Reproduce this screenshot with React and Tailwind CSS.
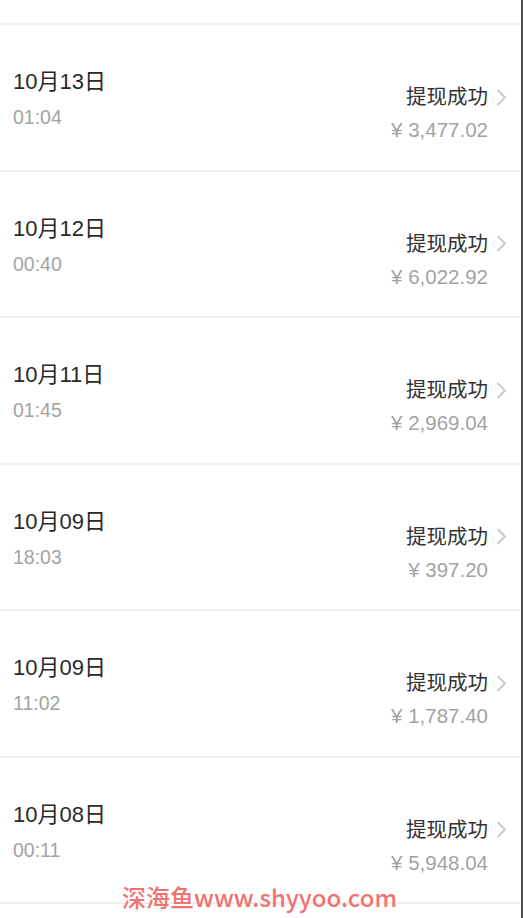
import React from "react";

const rows = [
  { date: "10月13日", time: "01:04", amount: "¥ 3,477.02" },
  { date: "10月12日", time: "00:40", amount: "¥ 6,022.92" },
  { date: "10月11日", time: "01:45", amount: "¥ 2,969.04" },
  { date: "10月09日", time: "18:03", amount: "¥ 397.20" },
  { date: "10月09日", time: "11:02", amount: "¥ 1,787.40" },
  { date: "10月08日", time: "00:11", amount: "¥ 5,948.04" },
];

const font = { fontFamily: '"Liberation Sans", "Noto Sans CJK SC", sans-serif' };

function Chevron() {
  return (
    <svg width="11" height="17" viewBox="0 0 11 17" className="shrink-0">
      <polyline points="2,1.5 9,8.5 2,15.5" fill="none" stroke="#c8c8c8" strokeWidth="1.8" strokeLinecap="round" strokeLinejoin="round" />
    </svg>
  );
}

function Row({ r }) {
  return (
    <div className="h-[146.5px] border-t-2 border-[#efefef] flex justify-between pl-[13px] pr-[14px] bg-white">
      <div className="flex flex-col pt-[42px]">
        <div className="text-[22px] leading-[30px] text-[#2a2a2a]">{r.date}</div>
        <div className="mt-[8px] text-[19.5px] leading-[24px] text-[#a3a3a3]">{r.time}</div>
      </div>
      <div className="flex flex-col items-end pt-[58px]">
        <div className="flex items-center gap-[8px]">
          <span className="text-[20.5px] leading-[28px] text-[#333]">提现成功</span>
          <Chevron />
        </div>
        <div className="mt-[7px] mr-[19px] text-[20.5px] leading-[24px] text-[#a3a3a3]">{r.amount}</div>
      </div>
    </div>
  );
}

export default function App() {
  return (
    <div className="relative w-[523px] h-[918px] overflow-hidden bg-white border-r-2 border-[#4d4d4d]" style={font}>
      <div className="h-[23px] bg-white" />
      {rows.map((r, i) => (
        <Row key={i} r={r} />
      ))}
      <div className="border-t-2 border-[#efefef] h-[20px] bg-white" />
      <div
        className="absolute left-[122px] top-[883px] text-[24px] leading-[28px] text-[#f07272] font-medium"
        style={{ fontFamily: '"Noto Sans CJK SC", sans-serif' }}
      >
        深海鱼www.shyyoo.com
      </div>
    </div>
  );
}
